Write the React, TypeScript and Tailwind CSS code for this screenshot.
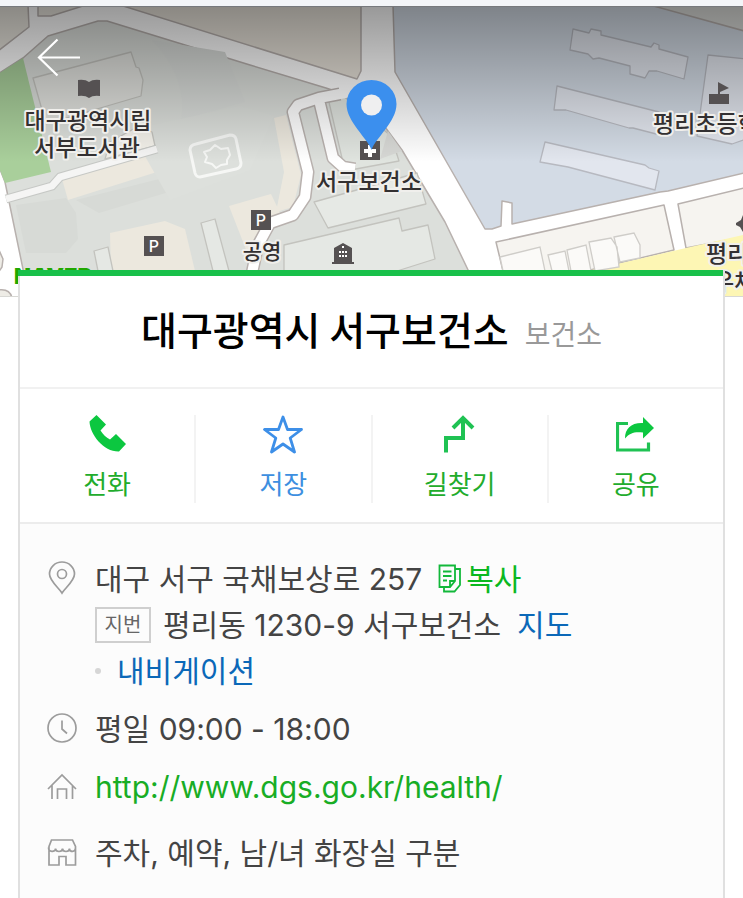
import React from 'react';

interface ActionProps {
  label: string;
  color: string;
  children: React.ReactNode;
}

function MapView() {
  return (
    <svg
      className="block w-full h-[290px]"
      viewBox="0 7 743 290"
      preserveAspectRatio="xMinYMin slice"
      fontFamily="'Noto Sans CJK KR', sans-serif"
      role="img"
      aria-label="서구보건소 지도"
    >
      <defs>
        <linearGradient id="shade" x1="0" y1="0" x2="0" y2="1">
          <stop offset="0" stopColor="#000" stopOpacity="0.4" />
          <stop offset="1" stopColor="#000" stopOpacity="0" />
        </linearGradient>
      </defs>

      {/* Roads are the white ground, blocks lie on top */}
      <rect y="7" width="743" height="290" fill="#fff" />
      <g stroke="#b8b1ae" strokeWidth="1.5" strokeLinejoin="round">
        <path d="M-2 5H28l1 22L-2 51z" fill="#e8e5dd" />
        <path d="M38 5v11h13l35-11z" fill="#e8e5dd" />
        <path d="M120 5l237 74 4-8V5z" fill="#e8e3da" />
        <path d="M393 5l2 67 90 157h7l9-3 1-25 10 2v21l148-32 8-1 80-19V5z" fill="#d3dbe5" />
        <path d="M650 5l98 27V5z" fill="#dcddda" />
        <path d="M496 242l168-37 10 45-88 21h-83z" fill="#f6f4f0" />
        <path d="M678 204l70-17v49l-62 12z" fill="#f6f4f0" />
        <path d="M-2 74l25-16 25-22 50-15h9l143 44 76 23 15 5 44 34 17 23 43 72 25 52H24L5 182l-7-18z" fill="#dcdfdb" />
        <path d="M-2 248l5 11-1 8-4 6zM-2 290q12-2 14 8H-2z" fill="#eeece6" />
      </g>
      <path d="M583 272l103-24 57-13v62H583z" fill="#fdf6b4" />

      {/* Campus grounds */}
      <path d="M-2 74l25-16 28 114-46 11-7-18z" fill="#a9cf9b" />
      <path d="M62 179l93-26 5 18-92 29z" fill="#ece8de" />
      <path d="M110 233l55-12 20 8 10 42h-84z" fill="#ece8de" />
      <path d="M229 206l42-12 12 25-20 8-16 25z" fill="#ece8de" />
      <path d="M274 118l12-3 15 60-8 32-17 5 8-40z" fill="#ece8de" />
      <path d="M16 205l50-7 10 15 2 26-12 14H26zM76 200l95-24 8 13-80 24z" fill="#d7dad6" />
      <path d="M152 40q36 38 29 80l64-18-20-50z" fill="#dadddA" />
      <path d="M130 130l110-24 34 10-24 54-80 30z" fill="#dde0dc" />
      <g stroke="#c3c3be" strokeWidth="1.3" strokeLinejoin="round">
        <path d="M33 78l98-26 5 15 3 1 4 12-2 16-95 28z" fill="#e2e3df" />
        <path d="M110 142l27-15 15 5 3 14-50 13z" fill="#f3f1ea" />
        <path d="M94 251l14-4 5 24H98zM201 223l14-4 14 52h-16z" fill="#e5e8e4" />
        <path d="M314 202l103-29 9 31-98 24z" fill="#e6e9e5" />
        <path d="M284 245l115-27 3 13 26-6 7 34-38 12H284z" fill="#e5e8e4" />
        <path d="M328 98l13-4 50 42 8 25-54 10z" fill="#e0e4df" />
        <path d="M388 131l14 20-22 8z" fill="#d7d8d5" stroke="none" />
      </g>
      <path d="M6 199l46-13 8-9 97-28" fill="none" stroke="#c6c8c5" strokeWidth="9" />
      <path d="M6 199l46-13 8-9 97-28" fill="none" stroke="#f5f5f4" strokeWidth="7" />
      <g fill="none" strokeLinejoin="round">
        <path d="M340 94l-21 4-21 7-5 7 15 60-3 25-12 18-23 8-12 22-6 28M319 100l14 58 10 9 12 2" stroke="#b8b1ae" strokeWidth="13" />
        <path d="M350 92l-31 6-21 7-5 7 15 60-3 25-12 18-23 8-12 22-6 28M319 100l14 58 10 9 12 2" stroke="#fff" strokeWidth="10" />
      </g>
      <g fill="none" stroke="#f6f7f5" strokeWidth="3" strokeLinejoin="round">
        <path d="M196 144l34-9q5 0 6 4l5 24q0 5-5 6l-36 8q-4 0-5-4l-5-23q0-5 6-6z" />
        <path d="M204 152l6-2 5-5 6 4 7-1 2 7-3 5 0 4-6 1-5 3-4-4-7-2 2-5z" strokeWidth="2" />
      </g>

      {/* School buildings */}
      <g fill="#e2e6ee" stroke="#b7b9c0" strokeWidth="1.3" strokeLinejoin="round">
        <path d="M573 29l16 4 2-4 10 2v4l50 12 3-4 5 2v4l29 8-4 22-27-8-8 0-4 7-15-4v-8l-31-8-6 1-5-5-18-4z" />
        <path d="M557 86l102 26 5 24-31-8-4 0-63-18-12 0z" />
        <path d="M545 142l100 23 4 3 10 3-4 19-87-23-28-5z" />
        <path d="M708 55l38 4v80l-14 5-35-8z" />
      </g>
      <g fill="#fbfaf8" stroke="#cfcdc9" strokeWidth="1.3">
        <path d="M500 257l40-10 5 24h-42zM548 255l17-4 4 20h-17zM567 250l19-5 5 26h-20zM589 242l22-4 6 9 2 20-24 4zM614 237l20-4 6 12v13l-20 4z" />
      </g>

      <rect y="7" width="743" height="155" fill="url(#shade)" />

      {/* Place marks */}
      <g fill="#555152">
        <path d="M78 80q7-1 11 2 4-3 11-2v16q-7-1-11 2-4-3-11-2z" />
        <path d="M718 94V82l11 6-9 4v2h9v10h-20V94z" />
        <rect x="360" y="141" width="20" height="19" />
        <rect x="251" y="210" width="20" height="20" />
        <rect x="144" y="236" width="20" height="20" />
        <path d="M332 264v-2h2v-14l9-5 9 5v14h2v2z" />
        <path d="M736 223l5-3 2-5v17l-3-5-4-2z" />
      </g>
      <g fill="#fff">
        <path d="M368 145h4v4h4v4h-4v4h-4v-4h-4v-4h4z" />
        <path d="M339 251h2v2h-2zM342 251h2v2h-2zM345 251h2v2h-2zM339 255h2v2h-2zM342 255h2v2h-2zM345 255h2v2h-2zM342 246h2v2h-2z" />
        <text x="261" y="226" fontFamily="Inter, sans-serif" fontSize="16" fontWeight="500" textAnchor="middle">P</text>
        <text x="154" y="252" fontFamily="Inter, sans-serif" fontSize="16" fontWeight="500" textAnchor="middle">P</text>
      </g>
      <g fill="#333031" stroke="#f0efec" strokeWidth="4" strokeLinejoin="round" paintOrder="stroke" fontSize="23" fontWeight="500">
        <text x="88" y="129" textAnchor="middle">대구광역시립</text>
        <text x="87" y="156" textAnchor="middle">서부도서관</text>
        <text x="369" y="190" textAnchor="middle">서구보건소</text>
        <text x="262" y="259" fontSize="21" textAnchor="middle">공영</text>
        <text x="653" y="132">평리초등학교</text>
        <text x="706" y="262">평리</text>
        <text x="713" y="290">우체국</text>
      </g>
      <text x="14" y="284" fontFamily="Inter, sans-serif" fontSize="22" fontWeight="900" fill="#20a800">NAVER</text>

      {/* Selected pin */}
      <path d="M371.500 150c-4-12-25-28-25-46a25 24 0 0 1 50 0c0 18-21 34-25 46z" fill="#3b8fee" />
      <circle cx="371.500" cy="105" r="10.500" fill="#efeff0" />
      <path d="M0 296.500h743" stroke="#d8d8d4" />
    </svg>
  );
}

function Action({ label, color, children }: ActionProps) {
  return (
    <li className="flex-1 flex">
      <button className={`flex-1 flex flex-col items-center gap-3 text-[26px] leading-9 cursor-pointer ${color}`}>
        <svg width="40" height="40" viewBox="0 0 40 40" fill="none" aria-hidden="true">
          {children}
        </svg>
        <span>{label}</span>
      </button>
    </li>
  );
}

function InfoIcon({ children }: { children: React.ReactNode }) {
  return (
    <span className="w-8 h-[46px] shrink-0 flex items-center justify-center">
      <svg width="32" height="36" viewBox="0 0 32 36" fill="none" stroke="#9c9c9c" strokeWidth="1.700" aria-hidden="true">
        {children}
      </svg>
    </span>
  );
}

export default function App() {
  return (
    <div className="min-h-screen flex flex-col bg-white font-[Inter,'Noto_Sans_CJK_KR',sans-serif]">
      <div className="h-[7px] bg-[#f3f5f8] border-b border-[#77797d]" />

      <header className="relative h-[290px]">
        <MapView />
        <button aria-label="뒤로" className="absolute left-8 top-7 cursor-pointer">
          <svg width="52" height="44" viewBox="32 35 52 44" fill="none" stroke="#fff" strokeWidth="2.200">
            <path d="M80 57.500H39M57.500 39.500L39 57.500l18.500 18" />
          </svg>
        </button>
      </header>

      <main className="relative flex-1 flex flex-col -mt-[27px] mx-[18px] bg-white border-x-2 border-x-[#e0e0e0]">
        <div className="h-[6px] -ml-[2px] bg-[#18c04a]" />

        {/* Place name */}
        <div className="h-[113px] flex items-baseline justify-center gap-4 pt-[22px] border-b-2 border-[#f1f1f1] font-['Noto_Sans_CJK_KR',sans-serif]">
          <h1 className="text-[39px] leading-[60px] font-medium text-black">대구광역시 서구보건소</h1>
          <span className="text-[28px] text-[#999]">보건소</span>
        </div>

        {/* Actions */}
        <ul className="h-[135px] flex items-start pt-[26px] border-b-2 border-[#ececec] divide-x-2 divide-[#f3f3f3]">
          <Action label="전화" color="text-[#22ac2c]">
            <path
              d="M9.500 0L2.500 6.500C3 20 17 37 32 36.500l7-7.500-10-10-6 5.500C19 22.500 16 19.500 13.500 15.500L19 9.500z"
              fill="#0cc740"
            />
          </Action>
          <Action label="저장" color="text-[#3d8fe0]">
            <path
              d="M20 2l4.500 12.500h14l-11.300 8.500 4.300 14L20 29 8.500 37l4.300-14L1.500 14.500h14z"
              stroke="#3d8fe8"
              strokeWidth="2.800"
              strokeLinejoin="round"
            />
          </Action>
          <Action label="길찾기" color="text-[#22ac2c]">
            <path d="M6 37.500V23h17V4M13 13L23 3l10 10" stroke="#1fc253" strokeWidth="4" />
          </Action>
          <Action label="공유" color="text-[#22ac2c]">
            <path d="M12 8.500H1.500V35h31v-7.500" stroke="#1fc253" strokeWidth="3.200" />
            <path d="M27 2l11 11-11 10.500v-6c-8-1-13 0-18 6 0-10 6-16 18-15.500z" fill="#0cc740" />
          </Action>
        </ul>

        {/* Details */}
        <div className="flex-1 flex flex-col gap-3 pt-8 pb-5 px-[26px] bg-[#fcfcfc] text-[30px] leading-[46px] text-[#444]">
          <section className="flex gap-[17px]">
            <InfoIcon>
              <path d="M16 32C13 27 3.500 20 3.500 13a12.500 12 0 0 1 25 0C28.500 20 19 27 16 32z" />
              <circle cx="16" cy="13" r="4.500" />
            </InfoIcon>
            <div className="flex flex-col">
              <div className="flex items-center">
                <span>대구 서구 국채보상로 257</span>
                <button className="flex items-center gap-1 ml-4 text-[#0ab81f] cursor-pointer">
                  <svg width="24" height="30" viewBox="0 0 24 30" fill="none" stroke="#12b83a" strokeWidth="1.800" aria-hidden="true">
                    <path d="M1.500 1.500H17v15.500l-5 6H1.500zM17 17h-5v6M17 5h5v16l-5.500 6.500H6V23M5 7.500h8.500M5 12h8.500M5 16.500h4" />
                  </svg>
                  복사
                </button>
              </div>
              <div className="flex items-center">
                <span className="w-14 h-9 flex items-center justify-center border-2 border-[#cfcfcf] text-[20px] text-[#666]">지번</span>
                <span className="ml-3">평리동 1230-9 서구보건소</span>
                <a href="#map" className="ml-4 text-[#0b68b8]">지도</a>
              </div>
              <div className="flex items-center gap-4">
                <span className="w-[6px] h-[6px] rounded-full bg-[#d6d6d6]" />
                <a href="#navigation" className="text-[#0b68b8]">내비게이션</a>
              </div>
            </div>
          </section>

          <section className="flex gap-[17px]">
            <InfoIcon>
              <circle cx="16" cy="17" r="14" />
              <path d="M16 9.500V18l5 4.500" />
            </InfoIcon>
            <span>평일 09:00 - 18:00</span>
          </section>

          <section className="flex gap-[17px]">
            <InfoIcon>
              <path d="M2 20L16 6l14 14M6 16.500V30M26.500 16.500V30M11.500 30V20h9v10" />
            </InfoIcon>
            <a href="http://www.dgs.go.kr/health/" className="text-[#18ad25]">http://www.dgs.go.kr/health/</a>
          </section>

          <section className="flex gap-[17px] mt-2">
            <InfoIcon>
              <path d="M5.500 5h21l3 6.500V30h-9.500v-8.500h-7V30h-10V11.500zM2.500 12.500c0 5 7 5 7 1 0 4 7 4 7 0 0 4 7 4 7 0 0 4 6 4 6-1" />
            </InfoIcon>
            <span>주차, 예약, 남/녀 화장실 구분</span>
          </section>
        </div>
      </main>
    </div>
  );
}
